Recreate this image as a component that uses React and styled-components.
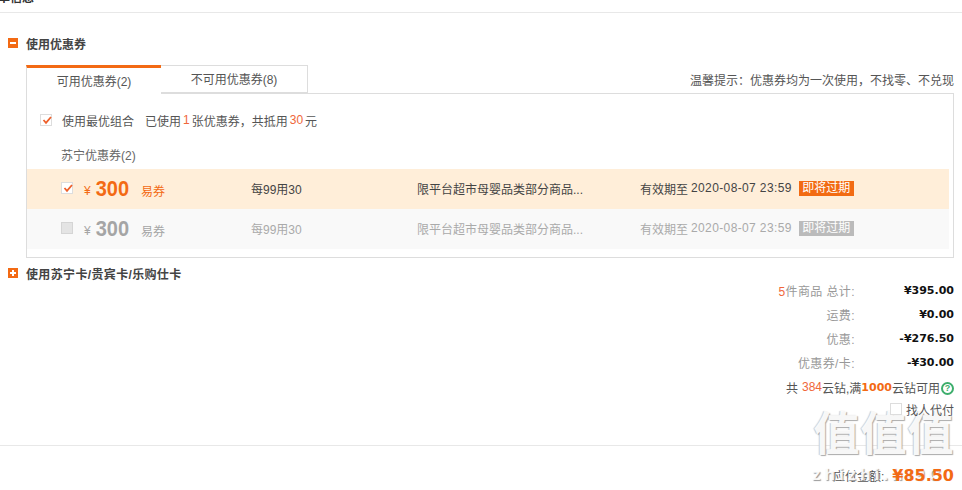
import React from 'react';
import styled, { createGlobalStyle } from 'styled-components';

const Global = createGlobalStyle`
  html, body { margin: 0; padding: 0; background: #fff; }
  body {
    font-family: "Liberation Sans", "Noto Sans CJK SC", sans-serif;
    font-size: 12px;
    color: #333;
  }
`;

const orange = '#f36a14';
const wideBold = '"DejaVu Sans", "Liberation Sans", sans-serif';

const Page = styled.div`
  position: relative;
  width: 962px;
  height: 490px;
  overflow: hidden;
`;

const TopBar = styled.div`
  height: 12px;
  border-bottom: 1px solid #e8e8e8;
  overflow: hidden;
`;

const TopTitle = styled.div`
  margin-top: -12px;
  margin-left: -14px;
  line-height: 20px;
  font-weight: bold;
  color: #333;
`;

const SectionHead = styled.div`
  display: flex;
  align-items: center;
  height: 12px;
  margin-top: ${p => p.$top}px;
  padding-left: 8px;
  gap: 8px;
  font-weight: bold;
  color: #444;
  letter-spacing: ${p => (p.$spaced ? 0.35 : 0)}px;
`;

const Toggle = styled.span`
  width: 10px;
  height: 10px;
  background: ${orange};
  position: relative;
  &::before {
    content: '';
    position: absolute;
    left: 2px;
    top: 4px;
    width: 6px;
    height: 2px;
    background: #fff;
  }
  &::after {
    content: '';
    display: ${p => (p.$plus ? 'block' : 'none')};
    position: absolute;
    left: 4px;
    top: 2px;
    width: 2px;
    height: 6px;
    background: #fff;
  }
`;

const Coupons = styled.div`
  margin: 16px 8px 0 26px;
`;

const TabRow = styled.div`
  display: flex;
  align-items: flex-start;
  height: 29px;
`;

const Tab = styled.div`
  box-sizing: border-box;
  width: ${p => (p.$active ? 135 : 147)}px;
  height: ${p => (p.$active ? 29 : 28)}px;
  display: flex;
  align-items: center;
  justify-content: center;
  padding-bottom: 2px;
  color: #555;
  background: #fff;
  border-top: ${p => (p.$active ? `3px solid ${orange}` : '1px solid #ddd')};
  border-left: ${p => (p.$active ? '1px solid #ddd' : 'none')};
  border-right: ${p => (p.$active ? 'none' : '1px solid #ddd')};
  border-bottom: ${p => (p.$active ? 'none' : '1px solid #ddd')};
  position: relative;
  z-index: 1;
`;

const Hint = styled.div`
  margin-left: auto;
  align-self: flex-end;
  line-height: 16px;
  padding-bottom: 5px;
  color: #555;
`;

const Panel = styled.div`
  box-sizing: border-box;
  height: 165px;
  margin-top: -1px;
  border: 1px solid #ddd;
`;

const BestRow = styled.div`
  display: flex;
  align-items: center;
  height: 16px;
  margin: 18px 0 0 13px;
  color: #555;
`;

const Box = styled.span`
  box-sizing: border-box;
  flex: none;
  display: inline-block;
  width: 12px;
  height: 12px;
  border: 1px solid ${p => (p.$off ? '#d5d5d5' : '#ddd')};
  background: ${p => (p.$off ? '#e4e4e4' : '#fff')};
  position: relative;
  svg { position: absolute; left: 0; top: -1px; }
`;

const BestLabel = styled.span`
  margin-left: 10px;
  margin-right: 11px;
`;

const Num = styled.span`
  color: #f0673a;
  margin: 0 2px;
`;

const GroupName = styled.div`
  margin: 20px 0 0 34px;
  line-height: 16px;
  color: #666;
`;

const CouponRow = styled.div`
  box-sizing: border-box;
  display: grid;
  grid-template-columns: 224px 166px 223px 1fr;
  align-items: center;
  height: 40px;
  width: 922px;
  padding-bottom: 2px;
  margin-top: ${p => (p.$off ? 0 : 5)}px;
  background: ${p => (p.$off ? '#f9f9f9' : '#ffeed9')};
  color: ${p => (p.$off ? '#aaa' : '#444')};
`;

const Amount = styled.div`
  display: flex;
  align-items: center;
  padding-left: 34px;
  color: ${p => (p.$off ? '#a5a5a5' : orange)};
`;

const Yen = styled.span`
  margin-left: 11px;
  font-size: 12px;
  margin-top: 5px;
`;

const Value = styled.span`
  display: inline-block;
  margin-left: 5px;
  font-size: 20px;
  font-weight: bold;
  line-height: 24px;
  transform: scaleY(1.1);
`;

const Kind = styled.span`
  margin-left: 12px;
  margin-top: 5px;
`;

const Expiry = styled.div`
  display: flex;
  align-items: center;
`;

const DateText = styled.span`
  margin-left: 3px;
  letter-spacing: 0.375px;
`;

const Badge = styled.span`
  margin-left: 7px;
  width: 55px;
  height: 15px;
  line-height: 15px;
  text-align: center;
  color: #fff;
  background: ${p => (p.$off ? '#bbb' : '#f26b13')};
`;

const Summary = styled.div`
  margin: -1px 8px 0 0;
  display: flex;
  flex-direction: column;
  align-items: flex-end;
`;

const SumRow = styled.div`
  display: flex;
  align-items: center;
  justify-content: flex-end;
  height: 24px;
`;

const SumLabel = styled.span`
  color: #999;
  letter-spacing: 0.4px;
`;

const SumCount = styled.span`
  color: #f0673a;
`;

const SumValue = styled.span`
  width: 99px;
  text-align: right;
  font-family: ${wideBold};
  font-size: 11px;
  font-weight: bold;
  color: #111;
`;

const Beans = styled.div`
  display: flex;
  align-items: center;
  height: 26px;
  color: #555;
`;

const BeanCount = styled.span`
  color: #f0673a;
  margin-left: 4px;
`;

const BeanStrong = styled.span`
  color: ${orange};
  font-family: ${wideBold};
  font-weight: bold;
  font-size: 11px;
`;

const HelpDot = styled.span`
  box-sizing: border-box;
  width: 13px;
  height: 13px;
  margin-top: 2px;
  margin-left: 1px;
  border: 2px solid #3dae6c;
  border-radius: 50%;
  color: #3dae6c;
  font-size: 9px;
  font-weight: bold;
  line-height: 9px;
  text-align: center;
`;

const Proxy = styled.div`
  display: flex;
  align-items: center;
  gap: 4px;
  height: 18px;
  color: #555;
  position: relative;
  z-index: 2;
`;

const Divider = styled.div`
  margin-top: 27px;
  border-top: 1px solid #e8e8e8;
`;

const Payable = styled.div`
  display: flex;
  align-items: center;
  justify-content: flex-end;
  height: 20px;
  margin: 19px 8px 0 0;
  color: #555;
`;

const PayValue = styled.span`
  font-family: ${wideBold};
  font-size: 16px;
  font-weight: bold;
  color: ${orange};
  margin-left: 8px;
  position: relative;
  z-index: 2;
`;

const Watermark = styled.div`
  position: absolute;
  left: 809px;
  top: 404px;
  width: 150px;
  pointer-events: none;
  color: rgba(255, 255, 255, 0.92);
`;

const MarkGlyphs = styled.div`
  font-size: 46px;
  line-height: 60px;
  font-weight: bold;
  letter-spacing: 1px;
  text-align: center;
  white-space: nowrap;
  text-shadow: 1px 1px 1px #aaa, -1px 0 1px #ccc;
`;

const MarkUrl = styled.div`
  margin: 3px 0 0 3px;
  font-size: 17px;
  font-weight: bold;
  line-height: 16px;
  letter-spacing: 4px;
  white-space: nowrap;
  text-shadow: 1px 1px 1px #999;
`;

const Check = () => (
  <svg width="12" height="12" viewBox="0 0 12 12" fill="none">
    <path d="M2.5 6 L5 8.8 L10 3" stroke="#ee5f2a" strokeWidth="1.8" />
  </svg>
);

const Coupon = ({ off }) => (
  <CouponRow $off={off}>
    <Amount $off={off}>
      <Box $off={off}>{!off && <Check />}</Box>
      <Yen>¥</Yen>
      <Value>300</Value>
      <Kind>易券</Kind>
    </Amount>
    <div>每99用30</div>
    <div>限平台超市母婴品类部分商品...</div>
    <Expiry>
      有效期至
      <DateText>2020-08-07 23:59</DateText>
      <Badge $off={off}>即将过期</Badge>
    </Expiry>
  </CouponRow>
);

const totals = [
  { label: '件商品 总计:', count: 5, value: '¥395.00' },
  { label: '运费:', value: '¥0.00' },
  { label: '优惠:', value: '-¥276.50' },
  { label: '优惠券/卡:', value: '-¥30.00' },
];

export default function App() {
  return (
    <Page>
      <Global />
      <TopBar>
        <TopTitle>订单信息</TopTitle>
      </TopBar>

      <SectionHead $top={24}>
        <Toggle />
        使用优惠券
      </SectionHead>

      <Coupons>
        <TabRow>
          <Tab $active>可用优惠券(2)</Tab>
          <Tab>不可用优惠券(8)</Tab>
          <Hint>温馨提示：优惠券均为一次使用，不找零、不兑现</Hint>
        </TabRow>
        <Panel>
          <BestRow>
            <Box><Check /></Box>
            <BestLabel>使用最优组合</BestLabel>
            已使用<Num>1</Num>张优惠券，共抵用<Num>30</Num>元
          </BestRow>
          <GroupName>苏宁优惠券(2)</GroupName>
          <Coupon />
          <Coupon off />
        </Panel>
      </Coupons>

      <SectionHead $top={9} $spaced>
        <Toggle $plus />
        使用苏宁卡/贵宾卡/乐购仕卡
      </SectionHead>

      <Summary>
        {totals.map(t => (
          <SumRow key={t.label}>
            <SumLabel>
              {t.count && <SumCount>{t.count}</SumCount>}
              {t.label}
            </SumLabel>
            <SumValue>{t.value}</SumValue>
          </SumRow>
        ))}
        <Beans>
          共 <BeanCount>384</BeanCount>云钻,满<BeanStrong>1000</BeanStrong>云钻可用
          <HelpDot>?</HelpDot>
        </Beans>
        <Proxy>
          <Box />
          找人代付
        </Proxy>
      </Summary>

      <Divider />

      <Payable>
        应付金额:
        <PayValue>¥85.50</PayValue>
      </Payable>

      <Watermark>
        <MarkGlyphs>值值值</MarkGlyphs>
        <MarkUrl>zhizhi.hi9C</MarkUrl>
      </Watermark>
    </Page>
  );
}
